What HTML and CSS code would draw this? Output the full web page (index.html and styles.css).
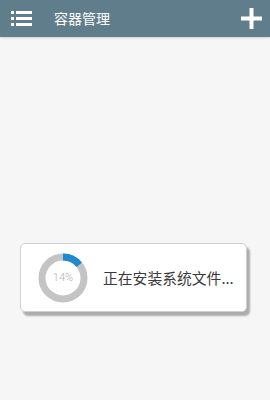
FILE: index.html
```html
<!DOCTYPE html>
<html lang="zh">
  <head>
    <meta charset="UTF-8" />
    <title>容器管理</title>
    <link rel="stylesheet" href="styles.css">
  </head>
  <body>
    <header class="toolbar">
      <svg class="menu-icon" width="22" height="18" viewBox="0 0 22 18">
        <rect x="0" y="2" width="3" height="3" fill="#fff" />
        <rect x="5" y="2" width="16" height="3" fill="#fff" />
        <rect x="0" y="8" width="3" height="3" fill="#fff" />
        <rect x="5" y="8" width="16" height="3" fill="#fff" />
        <rect x="0" y="14" width="3" height="3" fill="#fff" />
        <rect x="5" y="14" width="16" height="3" fill="#fff" />
      </svg>
      <span class="title">容器管理</span>
      <svg class="add-icon" width="21" height="21" viewBox="0 0 21 21">
        <rect x="8.5" y="0" width="4" height="21" fill="#fff" />
        <rect x="0" y="8.5" width="21" height="4" fill="#fff" />
      </svg>
    </header>

    <main class="content">
      <div class="dialog">
        <div class="ring">
          <svg width="50" height="50" viewBox="0 0 50 50">
            <circle cx="25" cy="25" r="21" fill="none" stroke="#c4c4c4" stroke-width="7" />
            <circle cx="25" cy="25" r="21" fill="none" stroke="#1e88d0" stroke-width="7"
              stroke-dasharray="18.5 200" transform="rotate(-90 25 25)" />
          </svg>
          <span class="percent">14%</span>
        </div>
        <span class="message">正在安装系统文件...</span>
      </div>
    </main>
  </body>
</html>
```

FILE: styles.css
```css
body {
  margin: 0;
  width: 270px;
  height: 400px;
  background-color: #f6f6f6;
  font-family: "Noto Sans CJK SC", "Noto Sans", sans-serif;
  display: flex;
  flex-direction: column;
}

.toolbar {
  height: 37px;
  background-color: #607d8c;
  display: flex;
  align-items: center;
  padding: 0 8px 0 11px;
  box-shadow: 0 1px 2px rgba(0, 0, 0, 0.15);
}

.menu-icon {
  margin-top: -1px;
}

.title {
  color: #ffffff;
  font-size: 14px;
  margin-left: 21px;
  flex: 1;
  margin-top: -1px;
}

.add-icon {
  margin-top: -1px;
}

.content {
  flex: 1;
  padding: 206px 0 0 20px;
}

.dialog {
  width: 225px;
  height: 67px;
  background: #ffffff;
  border: 1px solid #d0d0d0;
  border-radius: 5px;
  box-shadow: 3px 4px 2px rgba(0, 0, 0, 0.3);
  display: flex;
  align-items: center;
}

.ring {
  position: relative;
  width: 50px;
  height: 50px;
  margin-left: 17px;
}

.ring svg {
  display: block;
}

.percent {
  position: absolute;
  inset: 0;
  display: flex;
  align-items: center;
  justify-content: center;
  font-family: "Roboto", sans-serif;
  font-weight: 300;
  font-size: 11px;
  color: #b0b0b0;
}

.message {
  margin-left: 15px;
  font-size: 14.8px;
  color: #3a3a3a;
}
```
